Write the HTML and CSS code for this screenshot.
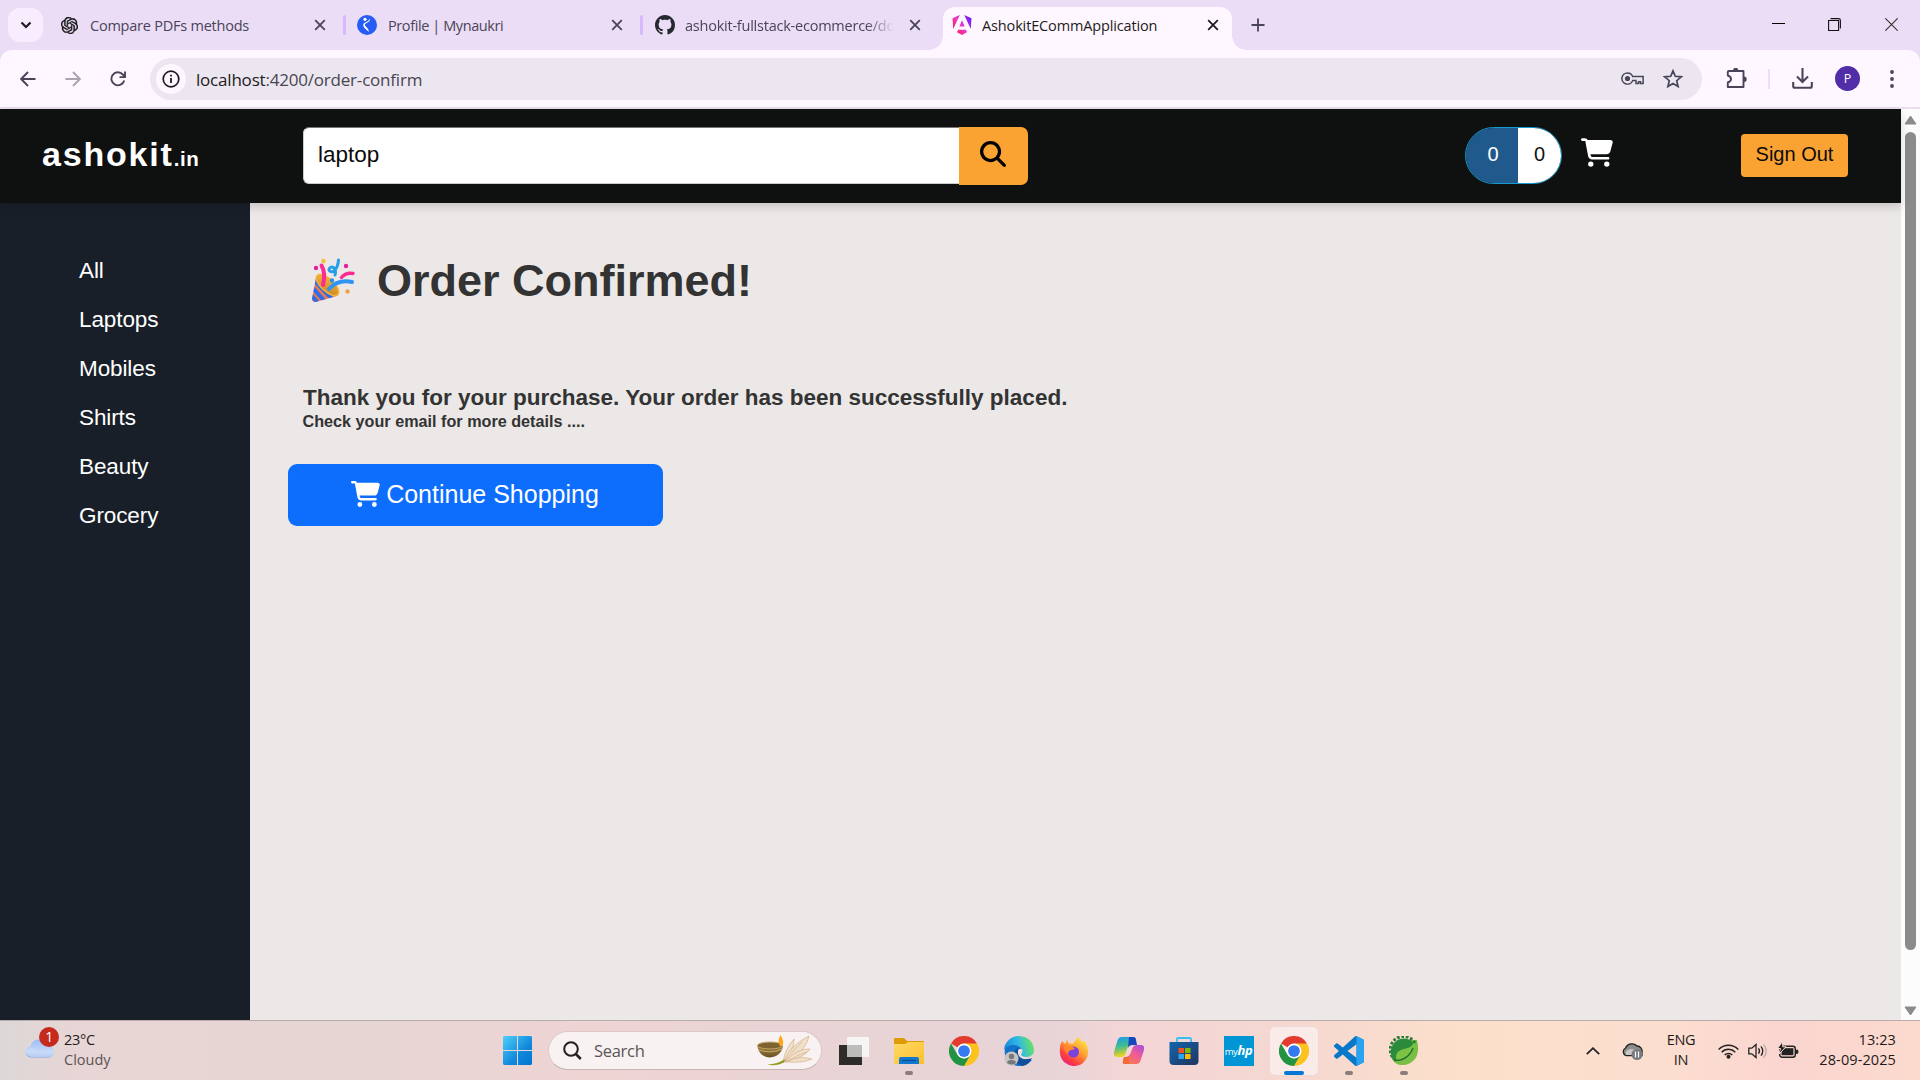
FILE: index.html
```html
<!DOCTYPE html>
<html lang="en">
<head>
<meta charset="utf-8">
<title>AshokitECommApplication</title>
<link rel="stylesheet" href="styles.css">
</head>
<body>
<svg class="defs" width="0" height="0" aria-hidden="true">
  <defs>
    <symbol id="close" viewBox="0 0 12 12"><path d="M1.2 1.2l9.6 9.6M10.8 1.2L1.2 10.8" fill="none" stroke="currentColor" stroke-width="1.8"/></symbol>
    <symbol id="cart" viewBox="0 0 576 512"><path fill="currentColor" d="M0 24C0 10.7 10.7 0 24 0H69.5c22 0 41.5 12.8 50.6 32h411c26.3 0 45.5 25 38.6 50.4l-41 152.3c-8.5 31.4-37 53.3-69.5 53.3H170.7l5.4 28.5c2.2 11.3 12.1 19.5 23.6 19.5H488c13.3 0 24 10.7 24 24s-10.7 24-24 24H199.7c-34.6 0-64.3-24.6-70.7-58.5L77.4 54.5c-.7-3.8-4-6.5-7.9-6.5H24C10.7 48 0 37.3 0 24zM128 464a48 48 0 1 1 96 0 48 48 0 1 1 -96 0zm336-48a48 48 0 1 1 0 96 48 48 0 1 1 0-96z"/></symbol>
    <symbol id="chrome" viewBox="0 0 48 48">
      <path fill="#e33b2e" d="M24 24L3.2 12A24 24 0 0 1 44.8 12z"/>
      <path fill="#fcc31e" d="M24 12h20.8A24 24 0 0 1 24 48l10.4-18z"/>
      <path fill="#229342" d="M3.2 12L13.6 30 24 36l10.4-6L24 48A24 24 0 0 1 3.2 12z"/>
      <circle cx="24" cy="24" r="12" fill="#fff"/><circle cx="24" cy="24" r="9.4" fill="#3479ef"/>
    </symbol>
    <linearGradient id="ang" x1="0" y1=".9" x2="1" y2=".2"><stop offset="0" stop-color="#f5133c"/><stop offset=".45" stop-color="#f637c0"/><stop offset="1" stop-color="#6a1bff"/></linearGradient>
    <linearGradient id="win" x1="0" y1="0" x2="1" y2="1"><stop offset="0" stop-color="#4fd0fb"/><stop offset=".6" stop-color="#1089dc"/><stop offset="1" stop-color="#0273d2"/></linearGradient>
    <linearGradient id="cloud" x1="0" y1="0" x2="0" y2="1"><stop offset="0" stop-color="#9dbdf3"/><stop offset=".7" stop-color="#c5daf8"/><stop offset="1" stop-color="#7f9fe4"/></linearGradient>
    <linearGradient id="folder" x1="0" y1="0" x2="1" y2="1"><stop offset="0" stop-color="#ffd968"/><stop offset="1" stop-color="#fcbf2c"/></linearGradient>
    <linearGradient id="edgeTop" x1="0" y1=".6" x2="1" y2=".4"><stop offset="0" stop-color="#1583d8"/><stop offset=".5" stop-color="#2fb8e6"/><stop offset="1" stop-color="#6be55b"/></linearGradient>
    <linearGradient id="fox" x1=".9" y1="0" x2=".2" y2="1"><stop offset="0" stop-color="#fff44f"/><stop offset=".45" stop-color="#ff9a2e"/><stop offset=".75" stop-color="#ff4040"/><stop offset="1" stop-color="#e6187e"/></linearGradient>
    <linearGradient id="copL" x1="0" y1="0" x2=".2" y2="1"><stop offset="0" stop-color="#1b9af0"/><stop offset=".5" stop-color="#3fbd8f"/><stop offset="1" stop-color="#f3d21b"/></linearGradient>
    <linearGradient id="copR" x1="1" y1="0" x2=".3" y2="1"><stop offset="0" stop-color="#a24ee8"/><stop offset=".5" stop-color="#ee5b97"/><stop offset="1" stop-color="#f9794a"/></linearGradient>
    <linearGradient id="store" x1="0" y1="0" x2="1" y2="1"><stop offset="0" stop-color="#0f66ae"/><stop offset="1" stop-color="#23345c"/></linearGradient>
    <linearGradient id="bowl" x1="0" y1="0" x2="0" y2="1"><stop offset="0" stop-color="#a98b4c"/><stop offset="1" stop-color="#6b5224"/></linearGradient>
    <linearGradient id="cone" x1="0" y1="0" x2="1" y2="1"><stop offset="0" stop-color="#f6b73c"/><stop offset="1" stop-color="#c88526"/></linearGradient>
    <clipPath id="coneClip"><path d="M5.5 17.5L1 41Q1 44 4.5 44L27.500 37.500Q22 37 14.500 30 6.500 22 5.500 17.500z"/></clipPath>
  </defs>
</svg>

<div class="desktop">
  <header class="tabstrip">
    <button class="tab-search"><svg width="12" height="8" viewBox="0 0 12 8"><path d="M1.500 1.500L6 6l4.500-4.500" fill="none" stroke="#1d1b20" stroke-width="2.200"/></svg></button>
    <div class="tab tab-1">
      <svg class="favicon" width="17" height="17" viewBox="0 0 24 24"><path fill="#111" stroke="#111" stroke-width=".5" d="M22.2819 9.8211a5.9847 5.9847 0 0 0-.5157-4.9108 6.0462 6.0462 0 0 0-6.5098-2.9A6.0651 6.0651 0 0 0 4.9807 4.1818a5.9847 5.9847 0 0 0-3.9977 2.9 6.0462 6.0462 0 0 0 .7427 7.0966 5.98 5.98 0 0 0 .511 4.9107 6.051 6.051 0 0 0 6.5146 2.9001A5.9847 5.9847 0 0 0 13.2599 24a6.0557 6.0557 0 0 0 5.7718-4.2058 5.9894 5.9894 0 0 0 3.9977-2.9001 6.0557 6.0557 0 0 0-.7475-7.0729zm-9.022 12.6081a4.4755 4.4755 0 0 1-2.8764-1.0408l.1419-.0804 4.7783-2.7582a.7948.7948 0 0 0 .3927-.6813v-6.7369l2.02 1.1686a.071.071 0 0 1 .038.052v5.5826a4.504 4.504 0 0 1-4.4945 4.4944zm-9.6607-4.1254a4.4708 4.4708 0 0 1-.5346-3.0137l.142.0852 4.783 2.7582a.7712.7712 0 0 0 .7806 0l5.8428-3.3685v2.3324a.0804.0804 0 0 1-.0332.0615L9.74 19.9502a4.4992 4.4992 0 0 1-6.1408-1.6464zM2.3408 7.8956a4.485 4.485 0 0 1 2.3655-1.9728V11.6a.7664.7664 0 0 0 .3879.6765l5.8144 3.3543-2.0201 1.1685a.0757.0757 0 0 1-.071 0l-4.8303-2.7865A4.504 4.504 0 0 1 2.3408 7.872zm16.5963 3.8558L13.1038 8.364 15.1192 7.2a.0757.0757 0 0 1 .071 0l4.8303 2.7913a4.4944 4.4944 0 0 1-.6765 8.1042v-5.6772a.79.79 0 0 0-.407-.667zm2.0107-3.0231l-.142-.0852-4.7735-2.7818a.7759.7759 0 0 0-.7854 0L9.409 9.2297V6.8974a.0662.0662 0 0 1 .0284-.0615l4.8303-2.7866a4.4992 4.4992 0 0 1 6.6802 4.66zM8.3065 12.863l-2.02-1.1638a.0804.0804 0 0 1-.038-.0567V6.0742a4.4992 4.4992 0 0 1 7.3757-3.4537l-.142.0805L8.704 5.459a.7948.7948 0 0 0-.3927.6813zm1.0976-2.3654l2.602-1.4998 2.6069 1.4998v2.9994l-2.5974 1.4997-2.6067-1.4997Z"/></svg>
      <span class="tab-title">Compare PDFs methods</span>
      <svg class="x" width="12" height="12"><use href="#close"/></svg>
    </div>
    <div class="divider"></div>
    <div class="tab tab-2">
      <svg class="favicon" width="20" height="20" viewBox="0 0 20 20"><circle cx="10" cy="10" r="10" fill="#275df5"/><circle cx="8" cy="4.300" r="1.600" fill="#fff"/><path d="M13 3.500Q13.500 6.500 9 8.200 6.800 9.500 8.800 11.500 12 14 12 17 10 15 8 13.500 5 10.500 7 8.200 12 6 13 3.500z" fill="#fff"/></svg>
      <span class="tab-title">Profile | Mynaukri</span>
      <svg class="x" width="12" height="12"><use href="#close"/></svg>
    </div>
    <div class="divider"></div>
    <div class="tab tab-3">
      <svg class="favicon" width="20" height="20" viewBox="0 0 16 16"><path fill="#24292f" d="M8 0C3.58 0 0 3.58 0 8c0 3.54 2.29 6.53 5.47 7.59.4.07.55-.17.55-.38 0-.19-.01-.82-.01-1.49-2.01.37-2.53-.49-2.69-.94-.09-.23-.48-.94-.82-1.13-.28-.15-.68-.52-.01-.53.63-.01 1.08.58 1.23.82.72 1.21 1.87.87 2.33.66.07-.52.28-.87.51-1.07-1.78-.2-3.64-.89-3.64-3.95 0-.87.31-1.59.82-2.15-.08-.2-.36-1.02.08-2.12 0 0 .67-.21 2.2.82.64-.18 1.32-.27 2-.27s1.36.09 2 .27c1.53-1.04 2.2-.82 2.2-.82.44 1.1.16 1.92.08 2.12.51.56.82 1.27.82 2.15 0 3.07-1.87 3.75-3.65 3.95.29.25.54.73.54 1.48 0 1.07-.01 1.93-.01 2.2 0 .21.15.46.55.38A8.01 8.01 0 0 0 16 8c0-4.42-3.58-8-8-8z"/></svg>
      <span class="tab-title fade">ashokit-fullstack-ecommerce/do</span>
      <svg class="x" width="12" height="12"><use href="#close"/></svg>
    </div>
    <div class="tab tab-active">
      <svg class="favicon" width="20" height="20" viewBox="0 0 24 24"><path fill="url(#ang)" d="m16.712 17.711H7.288l-1.204 2.916L12 24l5.916-3.373-1.204-2.916ZM14.692 0l7.832 16.855.814-12.856L14.692 0ZM9.308 0 .662 3.999l.814 12.856L9.308 0Zm-.405 13.93h6.198L12 6.396 8.903 13.93Z"/></svg>
      <span class="tab-title">AshokitECommApplication</span>
      <svg class="x" width="12" height="12"><use href="#close"/></svg>
    </div>
    <svg class="new-tab" width="14" height="14" viewBox="0 0 14 14"><path d="M7 .5v13M.5 7h13" stroke="#4a4458" stroke-width="1.800"/></svg>
    <div class="window-controls">
      <svg width="13" height="13" viewBox="0 0 13 13"><path d="M0 5.500h13" stroke="#000"/></svg>
      <svg width="13" height="13" viewBox="0 0 13 13"><path d="M.6 2.500h10v10H.6z M2.500.6H10.500Q12.400.6 12.400 2.500V10.500" fill="none" stroke="#111" stroke-width="1.100"/></svg>
      <svg width="13" height="13" viewBox="0 0 13 13"><path d="M.3.3l12.400 12.400M12.700.3L.3 12.700" stroke="#333" stroke-width="1.100"/></svg>
    </div>
  </header>

  <div class="toolbar">
    <div class="nav-icons">
      <svg width="16" height="16" viewBox="0 0 16 16"><path d="M15.500 8H1.500M8 1L1.200 8 8 15" fill="none" stroke="#4a4458" stroke-width="1.900"/></svg>
      <svg width="16" height="16" viewBox="0 0 16 16"><path d="M.5 8h14M8 1l6.800 7L8 15" fill="none" stroke="#aaa4ae" stroke-width="1.900"/></svg>
      <svg width="16" height="16" viewBox="0 0 16 16"><path d="M14.200 9.500A6.500 6.500 0 1 1 12.800 3.500L15 5.800M15 .5v5.600H9.500" fill="none" stroke="#4a4458" stroke-width="1.900"/></svg>
    </div>
    <div class="omnibox">
      <span class="site-info"><svg width="18" height="18" viewBox="0 0 18 18"><circle cx="9" cy="9" r="7.800" fill="none" stroke="#1d1b20" stroke-width="1.700"/><path d="M9 8v5M9 4.700v1.900" stroke="#1d1b20" stroke-width="1.800"/></svg></span>
      <span class="url"><b>localhost</b>:4200/order-confirm</span>
      <svg class="key" width="23" height="13" viewBox="0 0 23 13"><path d="M6.500.9a5.600 5.600 0 1 0 5.200 7.600H15v3h2.500V9.800h2v1.700h2.600V4.600H11.700A5.600 5.600 0 0 0 6.500.9z" fill="none" stroke="#4a4458" stroke-width="1.500"/><circle cx="6.500" cy="6.500" r="2.600" fill="#4a4458"/></svg>
      <svg width="20" height="19" viewBox="0 0 20 19"><path d="M10 1.800l2.300 5.500 6 .5-4.600 3.900 1.400 5.800L10 14.400l-5.100 3.100 1.400-5.800L1.700 7.800l6-.5z" fill="none" stroke="#4a4458" stroke-width="1.700"/></svg>
    </div>
    <svg class="puzzle" width="22" height="21" viewBox="0 0 22 21"><path d="M2.800 3H17.500V19H1.800V14.500Q5 13.500 5 11T1.800 7.500V4Q1.800 3 2.800 3z" fill="none" stroke="#4a4458" stroke-width="1.900" stroke-linejoin="round"/><path d="M7 2.500a2.700 2.700 0 0 1 5.400 0zM18 8.500a2.700 2.700 0 0 1 0 5.400z" fill="#4a4458"/></svg>
    <div class="bar-split"></div>
    <svg class="download" width="21" height="21" viewBox="0 0 21 21"><path d="M10.500 0v13M5 8.500l5.500 5.500L16 8.500M1.200 14v4q0 1.800 1.800 1.800h15q1.800 0 1.800-1.800v-4" fill="none" stroke="#4a4458" stroke-width="2.100"/></svg>
    <span class="avatar">P</span>
    <svg class="dots" width="4" height="18" viewBox="0 0 4 18"><g fill="#4a4458"><circle cx="2" cy="2" r="1.900"/><circle cx="2" cy="9" r="1.900"/><circle cx="2" cy="16" r="1.900"/></g></svg>
  </div>

  <div class="viewport">
    <div class="app">
      <header class="app-header">
        <div class="logo">ashokit<small>.in</small></div>
        <div class="search">
          <input class="search-input" type="text" value="laptop">
          <button class="search-btn"><svg width="26" height="26" viewBox="0 0 512 512"><path d="M416 208c0 45.900-14.900 88.300-40 122.700L502.600 457.400c12.500 12.500 12.500 32.800 0 45.300s-32.800 12.500-45.300 0L330.700 376c-34.400 25.200-76.800 40-122.700 40C93.100 416 0 322.900 0 208S93.100 0 208 0S416 93.100 416 208zM208 352a144 144 0 1 0 0-288 144 144 0 1 0 0 288z"/></svg></button>
        </div>
        <div class="cart-pill"><span class="total">0</span><span class="count">0</span></div>
        <svg class="cart" width="32" height="29"><use href="#cart"/></svg>
        <button class="sign-out">Sign Out</button>
      </header>
      <div class="app-body">
        <nav class="sidebar">
          <a>All</a><a>Laptops</a><a>Mobiles</a><a>Shirts</a><a>Beauty</a><a>Grocery</a>
        </nav>
        <main class="content">
          <h1><svg class="party" width="44" height="46" viewBox="0 0 44 46">
            <path d="M5.500 17.500L1 41Q1 44 4.500 44L27.500 37.500Q22 37 14.500 30 6.500 22 5.500 17.500z" fill="#e8794f"/>
            <g clip-path="url(#coneClip)" stroke="#2f6bea" stroke-width="4" fill="none"><path d="M3 22l20 21M1 29l15 17M0 37l8 9"/></g>
            <ellipse cx="16.500" cy="27" rx="14" ry="6.300" transform="rotate(42 16.500 27)" fill="url(#cone)" stroke="#f3b23a" stroke-width="1.500"/>
            <path d="M10.500 7.500Q15 15 12 27" stroke="#fb2b93" stroke-width="4" fill="none" stroke-linecap="round"/>
            <path d="M18 31Q27 21 41 24" stroke="#3094f5" stroke-width="4" fill="none" stroke-linecap="round"/>
            <path d="M27.500 2Q27 10 22.500 13.500 18.500 14.500 18 11.500 19 8 22.500 9.500 25.500 13 24 17" stroke="#239ee8" stroke-width="3" fill="none" stroke-linecap="round"/>
            <path d="M30.500 19.500Q35 14 42 15.500" stroke="#fb2b93" stroke-width="3.400" fill="none" stroke-linecap="round"/>
            <circle cx="5" cy="10" r="2.200" fill="#e1209a"/><circle cx="12.500" cy="3" r="2.200" fill="#f5bf36"/><circle cx="35" cy="8" r="2.200" fill="#e1209a"/><circle cx="36.500" cy="33.500" r="2.200" fill="#eda149"/><circle cx="21" cy="22.500" r="2.200" fill="#2b8fe6"/>
          </svg><span>Order Confirmed!</span></h1>
          <p class="thanks">Thank you for your purchase. Your order has been successfully placed.</p>
          <p class="note">Check your email for more details ....</p>
          <button class="continue"><svg width="29" height="26"><use href="#cart"/></svg><span>Continue Shopping</span></button>
        </main>
      </div>
    </div>
    <div class="scrollbar">
      <svg width="13" height="10" viewBox="0 0 13 10"><path d="M6.500 1L12 9H1z" fill="#8b8b8b" stroke="#8b8b8b" stroke-linejoin="round"/></svg>
      <div class="thumb"></div>
      <svg width="13" height="10" viewBox="0 0 13 10"><path d="M6.500 9L12 1H1z" fill="#8b8b8b" stroke="#8b8b8b" stroke-linejoin="round"/></svg>
    </div>
  </div>

  <footer class="taskbar">
    <div class="weather">
      <div class="weather-icon">
        <svg width="30" height="21" viewBox="0 0 30 21"><path d="M6 20.500a5.500 5.500 0 0 1-.5-11A8.500 8.500 0 0 1 22 8.500a6 6 0 0 1 2 12z" fill="url(#cloud)"/><path d="M1 14q4-5 9-2 3 3 8 2 8-4 11 1-1 5-5 5H6q-5-1-5-6z" fill="#c9dcf8" opacity=".7"/></svg>
        <span class="badge">1</span>
      </div>
      <div class="weather-text"><span>23°C</span><span class="dim">Cloudy</span></div>
    </div>
    <svg class="start" width="29" height="29" viewBox="0 0 29 29"><path d="M1 0h13v14H0V1zM15 0h13l1 1v13H15zM0 15h14v14H1l-1-1zM15 15h14v13l-1 1H15z" fill="url(#win)"/></svg>
    <div class="task-search">
      <svg width="19" height="19" viewBox="0 0 19 19"><circle cx="8" cy="8" r="6.800" fill="none" stroke="#222" stroke-width="2"/><path d="M12.800 13l5 5" stroke="#222" stroke-width="2.500"/></svg>
      <span>Search</span>
      <svg class="diya" width="56" height="31" viewBox="0 0 56 31">
        <g fill="#f0dfca" stroke="#d0a97c" stroke-width=".6"><path d="M26 27Q28 14 37 4 37 17 28 26z"/><path d="M27 27Q33 10 52 1 50 15 30 26z"/><path d="M28 27Q40 13 53 14 48 22 31 26z"/><path d="M29 27Q42 20 55 24 46 28 31 27z"/><path d="M28 26Q38 13 45 7M31 26Q40 20 50 17" fill="none"/></g>
        <path d="M10 29.500Q21 29 28 24L27 27.500Q20 31.500 10 29.500z" fill="#8f9a1e"/>
        <path d="M.5 11Q13 5 26 11 25 18 19 21 12 24 6 20.500 1 17 .5 11z" fill="url(#bowl)"/>
        <ellipse cx="13" cy="10.500" rx="12.500" ry="3.500" fill="#7d6330" stroke="#c3a766" stroke-width="1"/>
        <path d="M1 14.500q12 5 24-.5" stroke="#c9ac68" fill="none"/>
        <path d="M23 11q-3-5 .500-11 4 6 2 11z" fill="#ffa718"/>
      </svg>
    </div>
    <div class="apps">
      <div class="app-slot"><svg width="30" height="28" viewBox="0 0 30 28"><path d="M0 8h23v20H0z" fill="#2d2c2b"/><path d="M8 0h22v20H8z" fill="#f5f5f5"/><path d="M8 8h15v12H8z" fill="#bcbcbb"/></svg></div>
      <div class="app-slot"><svg width="30" height="26" viewBox="0 0 30 26"><path d="M0 1q0-1 1-1h9l3 3h16q1 0 1 1v6H0z" fill="#dd9b05"/><path d="M0 6h11l3-2h16v22H0z" fill="url(#folder)"/><path d="M5 26v-5q0-2 2-2h16q2 0 2 2v5z" fill="#1277d0"/><path d="M8 22.500h14" stroke="#0b4d91" stroke-width="1.200"/></svg><i class="run"></i></div>
      <div class="app-slot"><svg width="30" height="30"><use href="#chrome"/></svg></div>
      <div class="app-slot"><svg width="30" height="30" viewBox="0 0 30 30">
        <path d="M1 19Q-1 8 9 7q9 1 9 6-4-1-4 4 0 8 14 7-5 6-13 6Q4 30 1 19z" fill="#1272c8"/>
        <path d="M0 14A15 15 0 0 1 15 0Q29 1 30 14q0 7-8 7-6 0-5-3 3-3 0-6Q8 5 0 14z" fill="url(#edgeTop)"/>
        <path d="M10 17q1-4 5-5-2 2-1 5 2 7 9 6 4 0 5-1-3 7-10 8-8-2-8-13z" fill="#134e9b"/>
        <path d="M14.500 13.500q3-1 3.500 1.500 0 2-1 3 0 2.500 4 3l3 0q-4 3-8 0-3-3-1.500-7.500z" fill="#f1dfdf"/>
        <circle cx="7.500" cy="22.500" r="7" fill="#c6c4c4"/><circle cx="7.500" cy="20.500" r="2.700" fill="#777"/><path d="M3 27q0-3 4.500-3t4.500 3q-4 3-9 0z" fill="#777"/></svg></div>
      <div class="app-slot"><svg width="30" height="30" viewBox="0 0 30 30"><path d="M3 5l3 3q2-4 3-4v3l5 1Q17 3 19 1q3 3 4 5l3-1q3 5 3 10A14 14 0 0 1 1 17Q0 10 3 5z" fill="url(#fox)"/><circle cx="14.500" cy="16" r="5.500" fill="#7a41dc"/><path d="M5 11q5-2 8 0l3 1q-1 2-4 2-3 1-3 4-4-3-4-7z" fill="#ff8a26"/></svg></div>
      <div class="app-slot"><svg width="30" height="28" viewBox="0 0 30 28"><path d="M8 0h11q3 0 2 4l-1 3q-5-1-7 5l-2 6q-1 2-4 2H3q-4 0-3-5L3 5Q4 0 8 0z" fill="url(#copL)"/><path d="M15 0h4q3 0 3 3l1 5h-4q-4 0-5 3z" fill="#1847bd"/><path d="M22 27H11q-3 0-2-3l1-4q5 1 7-5l2-5q1-2 4-2h4q4 0 3 5l-3 9q-1 5-5 5z" fill="url(#copR)"/><path d="M15 27h-4q-3 0-2-3l1-4h5z" fill="#ef6a37"/></svg></div>
      <div class="app-slot"><svg width="30" height="30" viewBox="0 0 30 30"><path d="M8 7V3q0-1 1-1h12q1 0 1 1v4" fill="none" stroke="#35c0f3" stroke-width="1.800"/><path d="M.5 6h29v19q0 4-4 4h-21q-4 0-4-4z" fill="url(#store)"/><path d="M9.500 12H15v5H9.500z" fill="#f25022"/><path d="M16 12h5.500v5H16z" fill="#7fba00"/><path d="M9.500 18H15v5H9.500z" fill="#2aa5ee"/><path d="M16 18h5.500v5H16z" fill="#ffb900"/></svg></div>
      <div class="app-slot"><div class="myhp">my<b>hp</b></div></div>
      <div class="app-slot active"><svg width="30" height="30"><use href="#chrome"/></svg><i class="run current"></i></div>
      <div class="app-slot"><svg width="30" height="30" viewBox="0 0 24 24"><path fill="#0a78c8" d="M23.150 2.587L18.210.210a1.494 1.494 0 0 0-1.705.290l-9.460 8.630-4.120-3.128a.999.999 0 0 0-1.276.057L.327 7.261A1 1 0 0 0 .326 8.740L3.899 12 .326 15.260a1 1 0 0 0 .001 1.479L1.650 17.940a.999.999 0 0 0 1.276.057l4.120-3.128 9.460 8.630a1.492 1.492 0 0 0 1.704.290l4.942-2.377A1.500 1.500 0 0 0 24 20.060V3.939a1.500 1.500 0 0 0-.850-1.352zm-5.146 14.861L10.826 12l7.178-5.448v10.896z"/><path fill="#2aa3f2" d="M18 .1l5.150 2.487Q24 3 24 3.900V20.060q0 1-.85 1.353L18 23.900z"/></svg><i class="run"></i></div>
      <div class="app-slot"><svg width="30" height="30" viewBox="0 0 30 30">
        <path d="M28 4Q31 16 26 23 19 31 9 28.500 3 26 3 20L15 4z" fill="#79bf43"/>
        <path d="M26 7A13.300 13.300 0 1 0 5 23" fill="none" stroke="#2c7d3a" stroke-width="3" stroke-dasharray="2.700 1.700"/>
        <path d="M4 24Q-1 14 5 7 12 0 21 4l4 3q-2 5-9 6-9 2-9 8 0 2 1 3z" fill="#2c8a3c"/>
        <path d="M25 6q-2 6-10 7-8 2-8 8 1 3 4 3 13 1 14-18z" fill="#7cc344"/>
        <path d="M5 24.500Q19 25 24 12" stroke="#226f31" stroke-width="1.400" fill="none"/></svg><i class="run"></i></div>
    </div>
    <div class="tray">
      <svg class="chev" width="14" height="8" viewBox="0 0 14 8"><path d="M.8 7.200L7 1.200l6.200 6" fill="none" stroke="#222" stroke-width="1.800"/></svg>
      <svg class="onedrive" width="21" height="18" viewBox="0 0 21 18"><path d="M4.500 13.500A4 4 0 0 1 3.500 6 7 7 0 0 1 15 4a5 5 0 0 1 5 6v3.500z" fill="#8d8c8b" stroke="#222" stroke-width="1.300"/><path d="M4 13Q2 9 8 7l7 1-5 5z" fill="#c9c7c5"/><circle cx="15" cy="12.500" r="5.500" fill="#777b7f"/><path d="M13.500 9.500v6M16.500 9.500v6" stroke="#fff" stroke-width="1.200"/></svg>
      <div class="lang"><span>ENG</span><span>IN</span></div>
      <svg class="wifi" width="21" height="16" viewBox="0 0 21 16"><g fill="none" stroke="#222" stroke-width="1.500"><path d="M.7 6.500a13.200 13.200 0 0 1 19.600 0M3.700 9.200a9.500 9.500 0 0 1 13.600 0M6.700 12a5.300 5.300 0 0 1 7.600 0"/></g><circle cx="10.500" cy="13.700" r="2" fill="#222"/></svg>
      <svg class="volume" width="20" height="16" viewBox="0 0 20 16"><g fill="none" stroke="#222" stroke-width="1.300"><path d="M.8 5.200h3L8 1.500v13l-4.200-3.700h-3z"/><path d="M10.500 5.300q2 2.700 0 5.400M13 3.300q3.500 4.700 0 9.400"/><path d="M15.500 1.300q5.500 6.700 0 13.400" stroke="#b9a9a5"/></g></svg>
      <svg class="battery" width="21" height="17" viewBox="0 0 21 17"><rect x="1.700" y="4.200" width="15.600" height="11" rx="2.500" fill="none" stroke="#222" stroke-width="1.400"/><rect x="3.600" y="6.200" width="11.800" height="7" fill="#222"/><path d="M18.500 8h1q1 1.700 0 3.500h-1z" fill="#222" stroke="#222"/><path d="M4.500-.5L-.5 6.500h3L1 12 8 4.800H4.800z" fill="#222" stroke="#fcd9d0" stroke-width="1"/></svg>
      <div class="clock"><span>13:23</span><span>28-09-2025</span></div>
    </div>
  </footer>
</div>
</body>
</html>
```
FILE: styles.css
```css
* { box-sizing: border-box; }
body { margin: 0; overflow: hidden; font-family: "Liberation Sans", Arial, sans-serif; }
button { border: 0; padding: 0; font-family: inherit; }
svg { display: block; flex: none; }
.defs { position: absolute; }

.desktop { width: 1920px; height: 1080px; display: grid; grid-template-rows: 50px 59px 911px 60px; background: #ebddf6; }

/* Browser tab strip */
.tabstrip { display: flex; align-items: center; padding-left: 8px; background: #ebddf6; font-family: "Open Sans", "Noto Sans", sans-serif; font-size: 14.5px; color: #4a4458; }
.tab-search { width: 35px; height: 34px; border-radius: 12px; background: #f8edff; display: grid; place-items: center; }
.tab { display: flex; align-items: center; height: 100%; }
.tab-title { flex: 1; min-width: 0; white-space: nowrap; overflow: hidden; letter-spacing: -.23px; line-height: 22px; padding-top: 1px; }
.tab-1 { width: 300px; padding: 0 17px 0 18px; gap: 12px; }
.tab-2 { width: 294px; padding: 0 17px 0 11px; gap: 11px; }
.tab-2 .tab-title { letter-spacing: -.4px; }
.tab-3 { width: 300px; padding: 0 22px 0 12px; gap: 10px; }
.tab-3 .x { margin-left: 3px; }
.fade { -webkit-mask-image: linear-gradient(90deg, #000 86%, transparent 99%); mask-image: linear-gradient(90deg, #000 86%, transparent 99%); }
.divider { width: 3px; height: 20px; border-radius: 2px; background: #d8b9ff; }
.tab-active { position: relative; width: 289px; height: 43px; align-self: flex-end; padding: 0 13px 7px 9px; gap: 11px; border-radius: 12px 12px 0 0; background: #fef7ff; color: #1d1b20; }
.tab-active .tab-title { letter-spacing: -.14px; margin-left: -1px; }
.tab-active::before, .tab-active::after { content: ""; position: absolute; bottom: 0; width: 14px; height: 14px; }
.tab-active::before { left: -14px; background: radial-gradient(circle at 0 0, transparent 13.5px, #fef7ff 14px); }
.tab-active::after { right: -14px; background: radial-gradient(circle at 100% 0, transparent 13.5px, #fef7ff 14px); }
.new-tab { margin-left: 19px; }
.window-controls { display: flex; gap: 44px; margin-left: auto; padding: 0 22px 1px 0; }
.window-controls svg:first-child { margin-right: -1px; }

/* Browser toolbar */
.toolbar { display: flex; align-items: center; padding: 0 26px 0 20px; border-bottom: 2px solid #e9dff0; border-radius: 12px 12px 0 0; background: #fef7ff; font-family: "Open Sans", "Noto Sans", sans-serif; }
.nav-icons { display: flex; gap: 29px; }
.omnibox { display: flex; align-items: center; width: 1552px; height: 42px; margin-left: 24px; padding: 0 19px 0 6px; border-radius: 21px; background: #ece6f0; }
.site-info { width: 30px; height: 30px; border-radius: 50%; background: #fef7ff; display: grid; place-items: center; }
.url { flex: 1; margin-left: 10px; padding-top: 1px; font-size: 17px; letter-spacing: -.2px; color: #494551; }
.url b { font-weight: 400; color: #1d1b20; }
.key { margin-right: 19px; }
.puzzle { margin-left: 24px; }
.bar-split { width: 2px; height: 20px; margin-left: 20px; background: #eaddff; }
.download { margin-left: 22px; }
.avatar { width: 25px; height: 25px; margin-left: 22px; border-radius: 50%; background: #512da8; color: #fff; font-size: 12.5px; line-height: 25px; text-align: center; }
.dots { margin-left: auto; }

/* Page */
.viewport { display: flex; min-height: 0; background: #fcfcfc; }
.app { width: 1901px; display: flex; flex-direction: column; }
.app-header { position: relative; z-index: 1; display: flex; align-items: center; height: 94px; padding: 0 53px 1px 42px; background: #0f1111; box-shadow: 0 4px 9px rgba(0, 0, 0, .16); }
.logo { width: 261px; margin-top: 2px; color: #fff; font-size: 34px; font-weight: 700; letter-spacing: 1.8px; line-height: 40px; white-space: nowrap; }
.logo small { font-size: 20.5px; letter-spacing: .6px; }
.search { display: flex; width: 725px; height: 58px; }
.search-input { width: 656px; height: 57px; padding: 0 14px 1px; border: 1px solid #ccc; border-top-color: #767676; border-right: 0; border-radius: 6px 0 0 6px; background: #fff; font: 22.5px "Liberation Sans", Arial, sans-serif; color: #0b0b0b; }
.search-btn { width: 69px; display: grid; place-items: center; border-radius: 0 7px 7px 0; background: #faa333; }
.search-btn svg { margin: -3px 1px 0 0; }
.cart-pill { display: flex; width: 97px; height: 57px; margin: -1px 0 0 437px; border: 1.5px solid #149bd0; border-radius: 29px; overflow: hidden; font-size: 20px; }
.cart-pill span { display: grid; place-items: center; padding-bottom: 2px; }
.total { width: 52px; padding-left: 2px; background: #205a8d; color: #fff; }
.count { flex: 1; background: #fff; color: #111; }
.cart { margin: -7px 0 0 19px; color: #fff; }
.sign-out { width: 107px; height: 43px; margin-left: auto; border-radius: 4px; background: #faa333; color: #0b0b0b; font-size: 20px; padding-bottom: 2px; }
.app-body { flex: 1; display: flex; min-height: 0; }
.sidebar { width: 250px; padding: 43px 0 0 79px; display: flex; flex-direction: column; background: #191f29; }
.sidebar a { height: 49px; line-height: 49px; color: #fff; font-size: 22.5px; letter-spacing: -.1px; }
.content { flex: 1; padding: 50px 0 0 38px; background: #ece8e7; color: #333; }
.content h1 { display: flex; align-items: center; gap: 22px; height: 56px; margin: 0; padding-left: 23px; font-size: 45px; line-height: 56px; }
.content p { margin: 0; padding-left: 15px; font-weight: 700; }
.content .thanks { margin-top: 76px; font-size: 22.5px; line-height: 26px; }
.content .note { padding-left: 14.5px; font-size: 16.2px; line-height: 20px; }
.continue { display: flex; align-items: center; justify-content: center; gap: 6px; width: 375px; height: 62px; margin-top: 33px; padding: 0 1px 1px 0; border-radius: 9px; background: #0d6efd; color: #fff; font-size: 25px; }
.continue svg { margin-top: -2px; }
.scrollbar { flex: 1; display: flex; flex-direction: column; align-items: center; padding: 6px 0 4px; }
.scrollbar svg:last-child { margin-top: auto; }
.thumb { width: 11px; height: 818px; margin-top: 7px; border-radius: 6px; background: #8b8b8b; }

/* Taskbar */
.taskbar { display: flex; align-items: center; border-top: 1px solid #b9aba9; background: linear-gradient(90deg, #dcd8d7 0, #e8d5d5 4%, #e7d5d4 20%, #efd4d4 31%, #e8d3d5 45%, #e8d4d7 55%, #f2d5d6 58%, #f6d8d0 68%, #fce0cb 76%, #fcdecf 87%, #fad5d0 93%, #fcdacd 100%); font-family: "Open Sans", "Noto Sans", sans-serif; font-size: 14.5px; line-height: 20px; color: #1f1b1b; letter-spacing: -.3px; }
.weather { display: flex; align-items: center; width: 478px; padding-left: 25px; gap: 9px; }
.weather-icon { position: relative; margin-top: -6px; }
.badge { position: absolute; left: 14px; top: -10px; width: 20px; height: 20px; border-radius: 50%; background: #c42b1c; color: #fff; font-size: 14px; text-align: center; }
.weather-text, .lang, .clock { display: flex; flex-direction: column; margin-top: -1px; }
.dim { color: #5b5353; letter-spacing: 0; }
.start { margin-left: 25px; }
.task-search { display: flex; align-items: center; width: 274px; height: 39px; margin-left: 16px; padding: 0 8px 0 14px; border: 1px solid #dcc8c8; border-bottom-color: #c7b4b5; border-radius: 20px; background: #f8f2f2; font-size: 16.5px; color: #5b5555; }
.task-search span { margin-left: 12px; }
.diya { margin-left: auto; }
.apps { display: grid; grid-template-columns: repeat(11, 55px); margin-left: 4px; }
.app-slot { position: relative; height: 48px; width: 48px; justify-self: center; border-radius: 5px; display: grid; place-items: center; }
.app-slot.active { background: #faebe8; box-shadow: 0 0 0 1px #efd9d4; }
.run { position: absolute; bottom: 0; left: 20px; width: 8px; height: 4px; border-radius: 2px; background: #8a7d7b; }
.run.current { left: 14px; width: 20px; background: #0078d4; }
.myhp { width: 30px; height: 30px; background: #0096d6; color: #fff; font-size: 9.5px; line-height: 28px; text-align: center; letter-spacing: -.4px; }
.myhp b { font-size: 13px; font-style: italic; }
.tray { flex: 1; display: flex; align-items: center; padding-left: 155px; }
.onedrive { margin-left: 22px; }
.lang { width: 40px; margin-left: 18px; text-align: center; }
.wifi { margin-left: 17px; }
.volume { margin-left: 9px; }
.battery { margin-left: 10px; }
.clock { margin-left: auto; padding-right: 24px; text-align: right; letter-spacing: .1px; }
```
